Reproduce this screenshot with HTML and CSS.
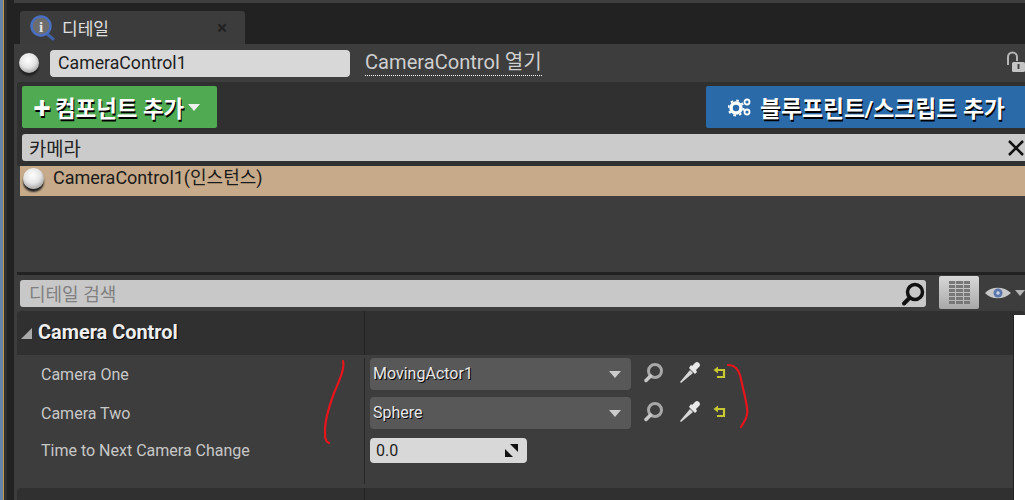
FILE: index.html
```html
<!DOCTYPE html>
<html lang="ko">
<head>
  <meta charset="UTF-8" />
  <meta name="viewport" content="width=device-width, initial-scale=1.0" />
  <title>디테일</title>
  <link rel="stylesheet" href="styles.css">
</head>
<body>
  <div class="window">
    <div class="tabstrip">
      <div class="tab">
        <svg class="tab-icon" width="26" height="26" viewBox="0 0 26 26">
          <path d="M17 18l7 6" stroke="#3f63a8" stroke-width="3" stroke-linecap="round"/>
          <circle cx="12" cy="11" r="9.500" fill="#6d6d6d" stroke="#4a6fc0" stroke-width="2.500"/>
          <text x="12" y="16.500" class="tab-i">i</text>
        </svg>
        <span class="tab-label">디테일</span>
        <span class="tab-close">×</span>
      </div>
    </div>

    <div class="panel">
      <div class="name-row">
        <span class="ball"></span>
        <div class="name-input">CameraControl1</div>
        <span class="open-link">CameraControl 열기</span>
        <svg class="lock" width="19" height="22" viewBox="0 0 19 22">
          <path d="M2 14V6a4.500 4.500 0 0 1 9 0v4" fill="none" stroke="#b5b5b5" stroke-width="2"/>
          <rect x="6" y="11" width="13" height="10" rx="1.500" fill="#c4c4c4"/>
          <rect x="11.500" y="13" width="2" height="5" fill="#444"/>
        </svg>
      </div>

      <div class="component-section">
        <div class="component-top">
          <div class="button-row">
            <button class="btn btn-green">
              <span class="plus">✚</span>컴포넌트 추가<span class="btn-caret"></span>
            </button>
            <button class="btn btn-blue">
              <svg class="gears" width="24" height="20" viewBox="0 0 24 20">
                <circle cx="8" cy="11" r="5" fill="none" stroke="#fff" stroke-width="3.500"/>
                <circle cx="8" cy="11" r="7.500" fill="none" stroke="#fff" stroke-width="2" stroke-dasharray="2.500 3.400"/>
                <circle cx="19" cy="5" r="2.500" fill="none" stroke="#fff" stroke-width="1.800"/>
                <circle cx="19" cy="15" r="2.500" fill="none" stroke="#fff" stroke-width="1.800"/>
              </svg>
              블루프린트/스크립트 추가
            </button>
          </div>
          <div class="component-search">
            <span>카메라</span>
            <svg class="clear" width="18" height="18" viewBox="0 0 18 18">
              <path d="M2 2l14 14M16 2L2 16" stroke="#111" stroke-width="2.500"/>
            </svg>
          </div>
        </div>
        <div class="component-item">
          <span class="ball ball-big"></span>
          <span class="item-label">CameraControl1(인스턴스)</span>
        </div>
      </div>

      <div class="details">
        <div class="search-row">
          <div class="detail-search">
            <span class="search-hint">디테일 검색</span>
            <svg width="26" height="26" viewBox="0 0 26 26">
              <circle cx="15" cy="11" r="7.500" fill="none" stroke="#111" stroke-width="3.500"/>
              <path d="M9.500 17L4 22.500" stroke="#111" stroke-width="4" stroke-linecap="round"/>
            </svg>
          </div>
          <div class="grid-btn"><span class="grid-icon"></span></div>
          <svg class="eye" width="30" height="18" viewBox="0 0 30 18">
            <path d="M1 9C7 2 20 2 27 9C20 16 7 16 1 9Z" fill="#c8c8c8"/>
            <circle cx="14" cy="9" r="4.500" fill="#5a76ad"/>
            <circle cx="14" cy="9" r="1.800" fill="#c8d0e0"/>
          </svg>
          <span class="eye-caret"></span>
        </div>

        <div class="category">
          <div class="category-head">
            <div class="head-left"><span class="arrow"></span>Camera Control</div>
            <div class="head-right"></div>
          </div>
          <div class="props">
            <div class="prop">
              <div class="prop-name">Camera One</div>
              <div class="prop-value">
                <div class="combo"><span>MovingActor1</span><i></i></div>
                <svg class="ic-find" width="24" height="24" viewBox="0 0 24 24"><circle cx="13" cy="10" r="6.500" fill="none" stroke="#a8a8a8" stroke-width="3"/><path d="M8.500 15L4 19.500" stroke="#c8c8c8" stroke-width="3.500" stroke-linecap="round"/></svg>
                <svg class="ic-pick" width="24" height="24" viewBox="0 0 24 24"><path d="M3 22l-1-1L12 9l3 3Z" fill="#d8d8d8"/><path d="M11 7l6 6 2-2-1-2 3-3a2.500 2.500 0 0 0-4-4l-3 3-1-1Z" fill="#e8e8e8"/></svg>
                <svg class="ic-reset" width="14" height="14" viewBox="0 0 14 14"><path d="M2 4h9v7H4" fill="none" stroke="#c8c832" stroke-width="2.200"/><path d="M5 0.500v7L0.500 4Z" fill="#c8c832"/></svg>
              </div>
            </div>
            <div class="prop">
              <div class="prop-name">Camera Two</div>
              <div class="prop-value">
                <div class="combo"><span>Sphere</span><i></i></div>
                <svg class="ic-find" width="24" height="24" viewBox="0 0 24 24"><circle cx="13" cy="10" r="6.500" fill="none" stroke="#a8a8a8" stroke-width="3"/><path d="M8.500 15L4 19.500" stroke="#c8c8c8" stroke-width="3.500" stroke-linecap="round"/></svg>
                <svg class="ic-pick" width="24" height="24" viewBox="0 0 24 24"><path d="M3 22l-1-1L12 9l3 3Z" fill="#d8d8d8"/><path d="M11 7l6 6 2-2-1-2 3-3a2.500 2.500 0 0 0-4-4l-3 3-1-1Z" fill="#e8e8e8"/></svg>
                <svg class="ic-reset" width="14" height="14" viewBox="0 0 14 14"><path d="M2 4h9v7H4" fill="none" stroke="#c8c832" stroke-width="2.200"/><path d="M5 0.500v7L0.500 4Z" fill="#c8c832"/></svg>
              </div>
            </div>
            <div class="prop prop-num">
              <div class="prop-name">Time to Next Camera Change</div>
              <div class="prop-value">
                <div class="num-input">
                  <span>0.0</span>
                  <svg width="13" height="13" viewBox="0 0 13 13"><path d="M5 0h8v8Z" fill="#111"/><path d="M0 5v8h8Z" fill="#111"/></svg>
                </div>
              </div>
            </div>
          </div>
        </div>
        <div class="next-category"><div class="next-left"></div></div>
      </div>
    </div>

    <div class="white-popup"></div>
    <svg class="annotations" width="1025" height="500" viewBox="0 0 1025 500">
      <path d="M343 361c2 8-4 20-9 32-4 11-9 26-9 37 0 8 0 11 4 13" />
      <path d="M728 365c6 0 11 4 13 14 2 11 5 19 6 29 1 6-1 11-3 14l-3 5" />
    </svg>
  </div>
</body>
</html>
```

FILE: styles.css
```css
* {
  box-sizing: border-box;
}
html, body {
  margin: 0;
  height: 500px;
  overflow: hidden;
}
body {
  font-family: "Roboto", "Noto Sans CJK KR", sans-serif;
  background-color: #3d3d3d;
}
.window {
  position: relative;
  width: 1025px;
  height: 500px;
  padding: 3px 0 0 14px;
  background:
    linear-gradient(#3f3f3f, #3f3f3f) 14px 0 / 100% 3px no-repeat,
    linear-gradient(to right, #6485a8 0, #6485a8 3px, #c49a48 3px, #c49a48 4px, #303030 4px, #303030 7px, #222 7px, #222 14px);
  overflow: hidden;
}
.tabstrip {
  height: 41px;
  padding: 8px 0 0 6px;
  background-color: #222;
}
.tab {
  display: flex;
  align-items: center;
  width: 225px;
  height: 33px;
  padding: 0 0 0 9px;
  background-color: #3c3c3c;
  border-radius: 3px 3px 0 0;
  color: #e0e0e0;
  font-size: 17px;
}
.tab-i {
  font: bold 15px "Liberation Serif", serif;
  fill: #e4e4e4;
  text-anchor: middle;
}
.tab-label {
  margin-left: 7px;
  width: 155px;
}
.tab-close {
  color: #222;
  font-weight: bold;
  font-size: 19px;
}
.panel {
  background-color: #3d3d3d;
}
.name-row {
  display: flex;
  align-items: center;
  height: 38px;
  padding-left: 5px;
  overflow: hidden;
}
.ball {
  display: block;
  flex: none;
  width: 20px;
  height: 20px;
  border-radius: 50%;
  background: radial-gradient(circle at 45% 35%, #fff 0, #e4e4e4 45%, #8d8d8d 90%);
  box-shadow: 0 3px 2px #222;
}
.ball-big {
  width: 21px;
  height: 21px;
  margin-top: -5px;
}
.name-input {
  width: 300px;
  height: 27px;
  margin-left: 11px;
  padding-left: 8px;
  background-color: #d8d8d8;
  border-radius: 4px;
  color: #1e1e1e;
  font-size: 17.700px;
  line-height: 26px;
}
.open-link {
  margin-left: 15px;
  border-bottom: 1px dotted #fff;
  color: #cfcfcf;
  font-size: 20.100px;
  line-height: 25px;
}
.lock {
  margin-left: auto;
  margin-top: -3px;
}
.component-section {
  height: 190px;
}
.component-top {
  height: 84px;
  margin-left: 3px;
  padding-top: 4px;
  background-color: #303030;
  border-radius: 3px 0 0 0;
}
.button-row {
  display: flex;
  justify-content: space-between;
  padding-left: 5px;
}
.btn {
  display: flex;
  align-items: center;
  height: 42px;
  border: 0;
  border-radius: 2px;
  color: #fff;
  font-family: inherit;
  font-weight: bold;
  text-shadow: 1px 2px 0 #000;
}
.btn-green {
  width: 195px;
  padding: 0 0 0 11px;
  background-color: #4faa52;
  font-size: 22.400px;
  white-space: nowrap;
}
.plus {
  font-size: 18px;
  margin-right: 4px;
}
.btn-caret {
  margin-left: 4px;
  border-top: 7px solid #f0f0f0;
  border-left: 6px solid transparent;
  border-right: 6px solid transparent;
}
.btn-blue {
  width: 319px;
  padding: 0 0 0 22px;
  background-color: #2a6aa8;
  border-radius: 2px 0 0 2px;
  font-size: 22.800px;
  white-space: nowrap;
}
.gears {
  margin-right: 8px;
}
.component-search {
  display: flex;
  align-items: center;
  justify-content: space-between;
  height: 27px;
  margin: 6px 0 0 5px;
  padding: 0 0 0 7px;
  background-color: #cbcbcb;
  border-radius: 3px 0 0 3px;
  color: #222;
  font-size: 18.800px;
}
.component-item {
  display: flex;
  align-items: center;
  height: 30px;
  margin-left: 6px;
  padding-left: 3px;
  background-color: #c6aa8a;
  color: #1a1a1a;
  font-size: 18px;
}
.item-label {
  margin-left: 9px;
  margin-top: -10px;
}
.details {
  height: 228px;
  margin-left: 3px;
  padding-top: 1px;
  background-color: #3d3d3d;
  border-top: 3px solid #222;
}
.search-row {
  display: flex;
  align-items: center;
  height: 33px;
}
.detail-search {
  display: flex;
  align-items: center;
  justify-content: space-between;
  width: 906px;
  height: 27px;
  margin: 2px 0 0 3px;
  padding: 0 0 0 9px;
  background-color: #c8c8c8;
  border-radius: 3px;
  color: #808080;
  font-size: 18px;
}
.search-hint {
  margin-top: -2px;
}
.grid-btn {
  display: flex;
  align-items: center;
  justify-content: center;
  width: 40px;
  height: 33px;
  margin-left: 13px;
  background: linear-gradient(#d8d8d8, #a8a8a8);
  border-radius: 2px;
}
.grid-icon {
  width: 21px;
  height: 23px;
  background:
    linear-gradient(to right, transparent 6px, #bdbdbd 6px, #bdbdbd 7px, transparent 7px, transparent 14px, #bdbdbd 14px, #bdbdbd 15px, transparent 15px),
    repeating-linear-gradient(#777 0 3px, transparent 3px 4px);
}
.eye {
  margin-left: 5px;
}
.eye-caret {
  margin-left: 1px;
  border-top: 6px solid #b5b5b5;
  border-left: 5px solid transparent;
  border-right: 5px solid transparent;
}
.category {
  margin-top: 2px;
}
.category-head {
  display: flex;
  height: 44px;
  background-color: #303030;
  border-radius: 4px 4px 0 0;
}
.head-left {
  display: flex;
  align-items: center;
  width: 347px;
  padding: 0 0 1px 4px;
  color: #eee;
  font-size: 19.900px;
  font-weight: bold;
  text-shadow: 1px 1px 0 #000;
}
.arrow {
  width: 0;
  height: 0;
  margin: 2px 6px 0 0;
  border-bottom: 11px solid #aaa;
  border-left: 11px solid transparent;
}
.head-right {
  flex: 1;
  border-left: 1px solid #222;
}
.props {
  height: 133px;
  padding-top: 3px;
}
.prop {
  display: flex;
  height: 39px;
}
.prop-num {
  height: 48px;
}
.prop-name {
  display: flex;
  align-items: center;
  width: 347px;
  height: 32px;
  padding-left: 24px;
  color: #c8c8c8;
  font-size: 16px;
}
.prop-num .prop-name {
  height: 28px;
}
.prop-value {
  display: flex;
  align-items: flex-start;
  flex: 1;
  padding-left: 5px;
  border-left: 1px solid #262626;
}
.combo {
  display: flex;
  align-items: center;
  justify-content: space-between;
  width: 261px;
  height: 32px;
  padding: 0 10px 2px 3px;
  background-color: #585858;
  border-radius: 4px;
  color: #e8e8e8;
  font-size: 16px;
  text-shadow: 1px 1px 0 #000;
}
.combo i {
  margin-top: 2px;
  border-top: 7px solid #ccc;
  border-left: 6px solid transparent;
  border-right: 6px solid transparent;
}
.ic-find {
  margin: 3px 0 0 11px;
}
.ic-pick {
  margin: 3px 0 0 12px;
}
.ic-reset {
  margin: 8px 0 0 11px;
}
.num-input {
  display: flex;
  align-items: center;
  justify-content: space-between;
  width: 157px;
  height: 25px;
  margin-top: 2px;
  padding: 0 9px 0 6px;
  background-color: #d8d8d8;
  border-radius: 4px;
  color: #1e1e1e;
  font-size: 16px;
}
.next-category {
  height: 30px;
  background-color: #303030;
  border-radius: 4px 4px 0 0;
}
.next-left {
  width: 348px;
  height: 100%;
  border-right: 1px solid #222;
}
.white-popup {
  position: absolute;
  left: 1013px;
  top: 315px;
  width: 12px;
  height: 185px;
  background-color: #fff;
  border-left: 1px solid #222;
}
.annotations {
  position: absolute;
  left: 0;
  top: 0;
  fill: none;
  stroke: #e8141c;
  stroke-width: 2.200;
  stroke-linecap: round;
  pointer-events: none;
}
```
